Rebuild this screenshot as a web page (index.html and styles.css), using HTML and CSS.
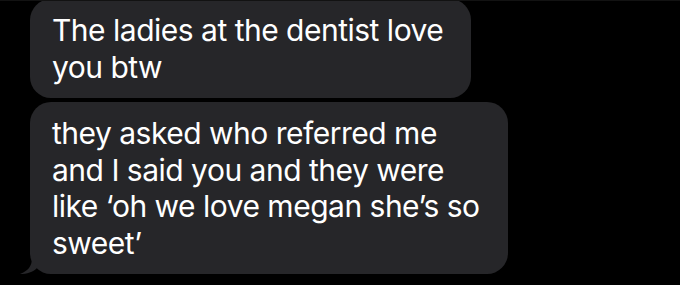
FILE: index.html
```html
<!DOCTYPE html>
<html lang="en">

<head>
    <meta charset="UTF-8">
    <meta name="viewport" content="width=device-width, initial-scale=1.0">
    <title>Messages</title>
    <link rel="stylesheet" href="styles.css">
</head>

<body>
    <div class="thread">
        <div class="bubble">The ladies at the dentist love<br>you btw</div>
        <div class="bubble last">
            they asked who referred me<br>and I said you and they were<br>like ‘oh we love megan she’s so<br>sweet’
            <svg class="tail" width="22" height="16" viewBox="0 0 22 16">
                <path d="M12 0 C12 8 8 13 0 16 C7 16 13 14 17 10 L22 10 L22 0 Z" fill="#262629" />
            </svg>
        </div>
    </div>
</body>

</html>
```

FILE: styles.css
```css
body {
    margin: 0;
    background: #000;
    font-family: Inter, "Liberation Sans", sans-serif;
    border-top: 1px solid #121212;
    overflow: hidden;
    height: 284px;
}

.thread {
    display: flex;
    flex-direction: column;
    align-items: flex-start;
    gap: 4px;
    padding-left: 30px;
    margin-top: -2px;
}

.bubble {
    position: relative;
    background: #262629;
    color: #fff;
    font-size: 30px;
    letter-spacing: -0.5px;
    line-height: 36.5px;
    padding: 13px 28px 13px 22px;
    border-radius: 21px;
    white-space: nowrap;
}

.tail {
    position: absolute;
    left: -10px;
    bottom: 0;
}
```
